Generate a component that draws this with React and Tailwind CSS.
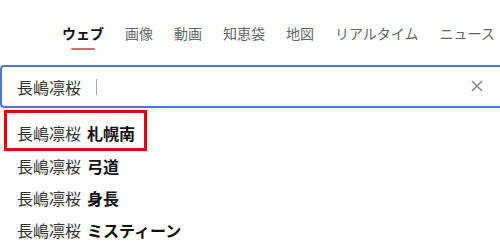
import React from "react";

const tabs = ["ウェブ", "画像", "動画", "知恵袋", "地図", "リアルタイム", "ニュース"];
const suggestions = ["札幌南", "弓道", "身長", "ミスティーン"];

export default function App() {
  return (
    <div
      className="w-[500px] h-[247px] overflow-hidden bg-white relative"
      style={{ fontFamily: '"Noto Sans CJK JP", "Noto Sans", sans-serif' }}
    >
      <div className="flex gap-[21px] pl-[62px] pt-[24px] h-[65px] whitespace-nowrap">
        {tabs.map((t, i) => (
          <div key={t} className="flex flex-col items-center">
            <span
              className={
                "text-[14px] leading-[18px] " +
                (i === 0 ? "font-bold text-[#111]" : "text-[#666]")
              }
            >
              {t}
            </span>
            {i === 0 && <div className="mt-[6px] w-[24px] h-[2px] bg-[#e8606e] rounded" />}
          </div>
        ))}
      </div>

      <div className="w-[520px] h-[43px] border-2 border-[#4a78d9] rounded-[4px] flex items-center pl-[15px]">
        <span className="text-[16px] text-[#333] leading-[20px]">長嶋凛桜</span>
        <span className="ml-[15px] w-px h-[16px] bg-[#aaa]" />
        <svg className="absolute left-[471px] top-[80px]" width="12" height="12" viewBox="0 0 12 12">
          <path d="M1 1L11 11M11 1L1 11" stroke="#888" strokeWidth="1.6" />
        </svg>
      </div>

      <div className="pt-[9px]">
        {suggestions.map((s, i) => (
          <div key={s} className="relative h-[32.4px] flex items-center pl-[17px] text-[16px] text-[#333]">
            <span>長嶋凛桜</span>
            <span className="font-bold text-[#111] ml-[6px]">{s}</span>
            {i === 0 && (
              <div className="absolute left-[4px] top-[-7px] w-[143px] h-[41px] border-[3px] border-[#e60012]" />
            )}
          </div>
        ))}
      </div>
    </div>
  );
}
